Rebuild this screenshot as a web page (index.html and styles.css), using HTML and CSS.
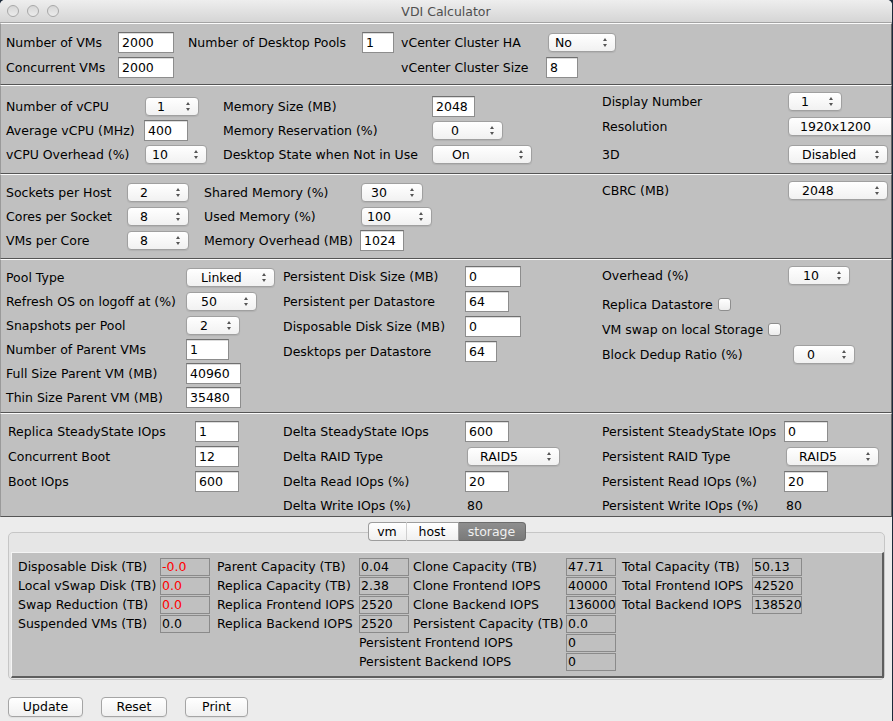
FILE: index.html
```html
<!DOCTYPE html>
<html lang="en">
<head>
  <meta charset="UTF-8">
  <title>VDI Calculator</title>
  <link rel="stylesheet" href="styles.css">
</head>
<body>
  <div class="window">
    <div class="titlebar">
      <div class="lights"><span></span><span></span><span></span></div>
      <div class="title">VDI Calculator</div>
      <div></div>
    </div>

    <!-- cluster -->
    <div class="panel p1">
      <div class="grid g1">
        <span class="lbl">Number of VMs</span>
        <span class="field w56">2000</span>
        <span class="lbl">Number of Desktop Pools</span>
        <span class="field w32">1</span>
        <span class="lbl">vCenter Cluster HA</span>
        <span class="combo c68 ml2 pad6">No</span>
        <span class="lbl">Concurrent VMs</span>
        <span class="field w56">2000</span>
        <span></span><span></span>
        <span class="lbl">vCenter Cluster Size</span>
        <span class="field w32">8</span>
      </div>
    </div>

    <!-- vm -->
    <div class="panel p2">
      <div class="grid g2a">
        <span class="lbl">Number of vCPU</span>
        <span class="combo c54 ml1 pad11">1</span>
        <span class="lbl">Memory Size (MB)</span>
        <span class="field w43">2048</span>
        <span class="lbl">Average vCPU (MHz)</span>
        <span class="field w44">400</span>
        <span class="lbl">Memory Reservation (%)</span>
        <span class="combo c71 pad18">0</span>
        <span class="lbl">vCPU Overhead (%)</span>
        <span class="combo c62 ml1 pad6">10</span>
        <span class="lbl">Desktop State when Not in Use</span>
        <span class="combo c100 pad19">On</span>
      </div>
      <div class="grid g2b">
        <span class="lbl">Display Number</span>
        <span class="combo c54 ml2 pad12">1</span>
        <span class="lbl">Resolution</span>
        <span class="combo c120 ml2 pad11">1920x1200</span>
        <span class="lbl">3D</span>
        <span class="combo c100 ml2 pad13">Disabled</span>
      </div>
    </div>

    <!-- host -->
    <div class="panel p3">
      <div class="grid g3a">
        <span class="lbl">Sockets per Host</span>
        <span class="combo c62 pad12">2</span>
        <span class="lbl">Shared Memory (%)</span>
        <span class="combo c62 ml1 pad9">30</span>
        <span class="lbl">Cores per Socket</span>
        <span class="combo c62 pad12">8</span>
        <span class="lbl">Used Memory (%)</span>
        <span class="combo c71 ml1 pad5">100</span>
        <span class="lbl">VMs per Core</span>
        <span class="combo c62 pad12">8</span>
        <span class="lbl">Memory Overhead (MB)</span>
        <span class="field w44">1024</span>
      </div>
      <div class="grid g3b">
        <span class="lbl">CBRC (MB)</span>
        <span class="combo c100 ml2 pad13">2048</span>
      </div>
    </div>

    <!-- storage -->
    <div class="panel p4">
      <div class="grid g4a">
        <span class="lbl">Pool Type</span>
        <span class="combo c89 pad14">Linked</span>
        <span class="lbl">Refresh OS on logoff at (%)</span>
        <span class="combo c71 pad14">50</span>
        <span class="lbl">Snapshots per Pool</span>
        <span class="combo c54 pad13">2</span>
        <span class="lbl">Number of Parent VMs</span>
        <span class="field w43">1</span>
        <span class="lbl">Full Size Parent VM (MB)</span>
        <span class="field w55">40960</span>
        <span class="lbl">Thin Size Parent VM (MB)</span>
        <span class="field w55">35480</span>
      </div>
      <div class="grid g4b">
        <span class="lbl">Persistent Disk Size (MB)</span>
        <span class="field w56">0</span>
        <span class="lbl">Persistent per Datastore</span>
        <span class="field w44">64</span>
        <span class="lbl">Disposable Disk Size (MB)</span>
        <span class="field w56">0</span>
        <span class="lbl">Desktops per Datastore</span>
        <span class="field w32">64</span>
      </div>
      <div class="grid g4c">
        <span class="lbl">Overhead (%)</span>
        <span class="combo c62 ml2 pad14">10</span>
        <span class="lbl wide">Replica Datastore <span class="check"></span></span>
        <span class="lbl wide">VM swap on local Storage <span class="check"></span></span>
        <span class="lbl">Block Dedup Ratio (%)</span>
        <span class="combo c62 ml7 pad13">0</span>
      </div>
    </div>

    <!-- iops -->
    <div class="panel p5">
      <div class="grid g5">
        <span class="lbl">Replica SteadyState IOps</span>
        <span class="field w44">1</span>
        <span class="lbl">Delta SteadyState IOps</span>
        <span class="field w44">600</span>
        <span class="lbl">Persistent SteadyState IOps</span>
        <span class="field w44">0</span>

        <span class="lbl">Concurrent Boot</span>
        <span class="field w44">12</span>
        <span class="lbl">Delta RAID Type</span>
        <span class="combo c93 ml2 pad12">RAID5</span>
        <span class="lbl">Persistent RAID Type</span>
        <span class="combo c93 ml2 pad12">RAID5</span>

        <span class="lbl">Boot IOps</span>
        <span class="field w44">600</span>
        <span class="lbl">Delta Read IOps (%)</span>
        <span class="field w44">20</span>
        <span class="lbl">Persistent Read IOps (%)</span>
        <span class="field w44">20</span>

        <span></span><span></span>
        <span class="lbl">Delta Write IOps (%)</span>
        <span class="lbl val">80</span>
        <span class="lbl">Persistent Write IOps (%)</span>
        <span class="lbl val">80</span>
      </div>
    </div>

    <div class="bottom">
      <div class="tabs">
        <span class="tab first">vm</span>
        <span class="tab">host</span>
        <span class="tab last active">storage</span>
      </div>
      <div class="pane">
        <div class="results">
          <span class="rl">Disposable Disk (TB)</span>
          <span class="rv neg">-0.0</span>
          <span class="rl c2">Parent Capacity (TB)</span>
          <span class="rv">0.04</span>
          <span class="rl c3">Clone Capacity (TB)</span>
          <span class="rv">47.71</span>
          <span class="rl c4">Total Capacity (TB)</span>
          <span class="rv">50.13</span>

          <span class="rl">Local vSwap Disk (TB)</span>
          <span class="rv neg">0.0</span>
          <span class="rl c2">Replica Capacity (TB)</span>
          <span class="rv">2.38</span>
          <span class="rl c3">Clone Frontend IOPS</span>
          <span class="rv">40000</span>
          <span class="rl c4">Total Frontend IOPS</span>
          <span class="rv">42520</span>

          <span class="rl">Swap Reduction (TB)</span>
          <span class="rv neg">0.0</span>
          <span class="rl c2">Replica Frontend IOPS</span>
          <span class="rv">2520</span>
          <span class="rl c3">Clone Backend IOPS</span>
          <span class="rv">136000</span>
          <span class="rl c4">Total Backend IOPS</span>
          <span class="rv">138520</span>

          <span class="rl">Suspended VMs (TB)</span>
          <span class="rv">0.0</span>
          <span class="rl c2">Replica Backend IOPS</span>
          <span class="rv">2520</span>
          <span class="rl c3">Persistent Capacity (TB)</span>
          <span class="rv">0.0</span>
          <span></span><span></span>

          <span></span><span></span><span></span>
          <span class="rl span2">Persistent Frontend IOPS</span>
          <span class="rv">0</span>
          <span></span><span></span>

          <span></span><span></span><span></span>
          <span class="rl span2">Persistent Backend IOPS</span>
          <span class="rv">0</span>
        </div>
      </div>
      <div class="buttons">
        <span class="btn b-update">Update</span>
        <span class="btn b-reset">Reset</span>
        <span class="btn b-print">Print</span>
      </div>
    </div>
  </div>
</body>
</html>
```

FILE: styles.css
```css
body {
  margin: 0;
  background: #1c2939;
  font-family: "DejaVu Sans", sans-serif;
  font-size: 12.5px;
  color: #000;
}

.window {
  width: 892px;
  height: 721px;
  background: #ececec;
  border-radius: 5px 5px 0 0;
  overflow: hidden;
}

/* title bar */
.titlebar {
  height: 22px;
  display: grid;
  grid-template-columns: 1fr auto 1fr;
  align-items: center;
  background: linear-gradient(#eeeeee, #d5d5d5);
  border-bottom: 1px solid #a3a3a3;
}

.lights {
  display: flex;
  gap: 8px;
  padding-left: 7px;
}

.lights span {
  width: 12px;
  height: 12px;
  box-sizing: border-box;
  border-radius: 50%;
  border: 1px solid #a8a8a8;
  background: linear-gradient(#d6d6d6, #ececec);
}

.title {
  color: #4f4f4f;
  padding-top: 1px;
}

/* raised panels */
.panel {
  display: flex;
  align-items: flex-start;
  box-sizing: border-box;
  background: #c0c0c0;
  border-top: 1px solid #fbfbfb;
  border-bottom: 1px solid #555;
  border-left: 1px solid #9a9a9a;
  border-right: 1px solid #666;
  padding-left: 5px;
  overflow: hidden;
}

.p1 { height: 62px; }
.p2 { height: 89px; }
.p3 { height: 85px; }
.p4 { height: 154px; }
.p5 { height: 104px; padding-left: 7px; }

.grid {
  display: grid;
  align-items: center;
  justify-items: start;
}

.g1 {
  padding-top: 6px;
  grid-template-columns: 112px 70px 174px 39px 145px 100px;
  grid-template-rows: 25px 25px;
}

.g2a {
  padding-top: 8px;
  grid-template-columns: 138px 79px 209px 170px;
  grid-template-rows: 24px 24px 24px;
}

.g2b {
  padding-top: 3px;
  grid-template-columns: 184px 120px;
  grid-template-rows: 25px 25px 30px;
}

.g3a {
  padding-top: 5px;
  grid-template-columns: 121px 77px 156px 242px;
  grid-template-rows: 24px 24px 24px;
}

.g3b {
  padding-top: 4px;
  grid-template-columns: 184px 120px;
  grid-template-rows: 22px;
}

.g4a {
  padding-top: 5px;
  grid-template-columns: 180px 97px;
  grid-auto-rows: 24px;
}

.g4b {
  padding-top: 4px;
  grid-template-columns: 182px 137px;
  grid-auto-rows: 25px;
}

.g4c {
  padding-top: 4px;
  grid-template-columns: 184px 100px;
  grid-template-rows: 22px 36px 14px 36px;
}

.g5 {
  padding-top: 5px;
  grid-template-columns: 187px 88px 182px 137px 182px 100px;
  grid-template-rows: 25px 25px 25px 22px;
}

.lbl {
  white-space: nowrap;
}

.wide {
  grid-column: span 2;
  display: flex;
  align-items: center;
}

.val {
  padding-left: 2px;
}

/* text fields */
.field {
  display: block;
  height: 21px;
  box-sizing: border-box;
  background: #fff;
  border: 1px solid #8d8d8d;
  border-top-color: #707070;
  box-shadow: inset 0 1px 0 #dcdcdc;
  padding-left: 3px;
  line-height: 19px;
}

.w32 { width: 32px; }
.w43 { width: 43px; }
.w44 { width: 44px; }
.w55 { width: 55px; }
.w56 { width: 56px; }

/* combo boxes */
.combo {
  position: relative;
  display: block;
  height: 19px;
  box-sizing: border-box;
  border: 1px solid #a0a0a0;
  border-radius: 4px;
  background: linear-gradient(#ffffff, #f1f1f1);
  box-shadow: 0 1px 1px rgba(0,0,0,0.08);
  line-height: 17px;
  white-space: nowrap;
}

.combo::before,
.combo::after {
  content: "";
  position: absolute;
  right: 8px;
  border-left: 2.5px solid transparent;
  border-right: 2.5px solid transparent;
}

.combo::before {
  top: 4px;
  border-bottom: 3px solid #555;
}

.combo::after {
  top: 10px;
  border-top: 3px solid #555;
}

.c54 { width: 54px; }
.c62 { width: 62px; }
.c68 { width: 68px; }
.c71 { width: 71px; }
.c89 { width: 89px; }
.c93 { width: 93px; }
.c100 { width: 100px; }
.c120 { width: 120px; }

.ml1 { margin-left: 1px; }
.ml2 { margin-left: 2px; }
.ml7 { margin-left: 7px; }

.pad5 { padding-left: 5px; }
.pad6 { padding-left: 6px; }
.pad9 { padding-left: 9px; }
.pad11 { padding-left: 11px; }
.pad12 { padding-left: 12px; }
.pad13 { padding-left: 13px; }
.pad14 { padding-left: 14px; }
.pad18 { padding-left: 18px; }
.pad19 { padding-left: 19px; }

.check {
  display: inline-block;
  width: 13px;
  height: 13px;
  box-sizing: border-box;
  margin-left: 5px;
  border: 1px solid #8e8e8e;
  border-radius: 3px;
  background: linear-gradient(#ffffff, #ececec);
}

/* bottom part */
.bottom {
  padding: 5px 7px 0 8px;
}

.tabs {
  position: relative;
  z-index: 1;
  display: flex;
  justify-content: center;
  margin-bottom: -9px;
}

.tab {
  height: 19px;
  box-sizing: border-box;
  line-height: 17px;
  text-align: center;
  border: 1px solid #9d9d9d;
  border-left: none;
  background: linear-gradient(#ffffff, #f0f0f0);
}

.tab.first {
  width: 39px;
  border-left: 1px solid #9d9d9d;
  border-right-color: #cfcfcf;
  border-radius: 4px 0 0 4px;
}

.tab:nth-child(2) {
  width: 52px;
}

.tab.last {
  width: 67px;
  border-radius: 0 4px 4px 0;
}

.tab.active {
  color: #f0f0f0;
  border-color: #6c6c6c;
  background: linear-gradient(#8e8e8e, #7a7a7a);
}

.pane {
  border: 1px solid #c6c6c6;
  border-radius: 5px;
  background: #e6e6e6;
  padding: 19px 0 1px 2px;
}

.results {
  display: grid;
  grid-template-columns: 142px 50px 149px 50px 157px 50px 136px 50px;
  grid-auto-rows: 19px;
  align-items: start;
  justify-items: start;
  background: #c0c0c0;
  border-top: 1px solid #f4f4f4;
  border-left: 1px solid #f4f4f4;
  border-right: 2px solid #5e5e5e;
  border-bottom: 2px solid #5e5e5e;
  padding: 5px 0 4px 6px;
}

.rl {
  line-height: 18px;
  white-space: nowrap;
}

.rl.c2 { padding-left: 7px; }
.rl.c3 { padding-left: 4px; }
.rl.c4 { padding-left: 6px; }

.rl.span2 {
  grid-column: span 2;
}

.rv {
  width: 50px;
  height: 18px;
  box-sizing: border-box;
  border: 1px solid #8a8a8a;
  padding-left: 1px;
  line-height: 16px;
  white-space: nowrap;
}

.rv.neg {
  color: #ff0000;
}

.buttons {
  display: flex;
  gap: 18px;
  margin-top: 17px;
}

.btn {
  height: 20px;
  box-sizing: border-box;
  border: 1px solid #a5a5a5;
  border-radius: 4px;
  background: linear-gradient(#ffffff, #f0f0f0);
  box-shadow: 0 1px 1px rgba(0,0,0,0.06);
  text-align: center;
  line-height: 18px;
}

.b-update { width: 75px; }
.b-reset { width: 66px; }
.b-print { width: 63px; }
```
